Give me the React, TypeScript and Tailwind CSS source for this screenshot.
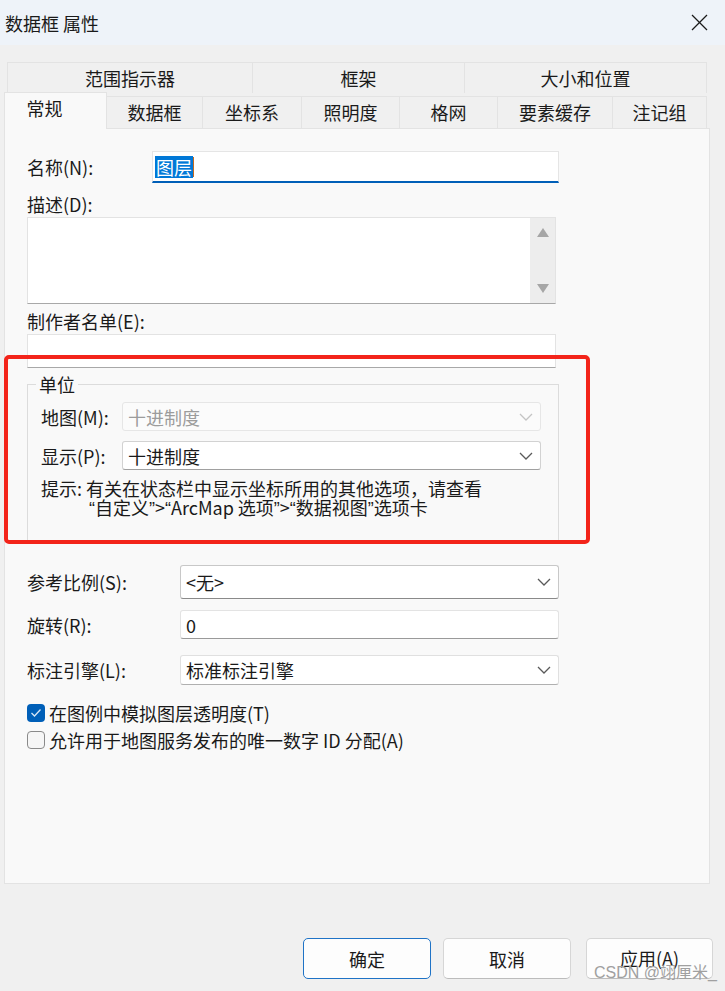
import React from "react";

function Chevron({ disabled }: { disabled?: boolean }) {
  return (
    <svg width="14" height="8" viewBox="0 0 14 8" className="shrink-0">
      <polyline
        points="1,1 7,7 13,1"
        fill="none"
        stroke={disabled ? "#c4c4c4" : "#5a5a5a"}
        strokeWidth="1.3"
      />
    </svg>
  );
}

function Combo({
  text,
  w,
  h,
  disabled,
  border,
}: {
  text: string;
  w: string;
  h: string;
  disabled?: boolean;
  border: string;
}) {
  return (
    <div
      className={`${w} ${h} ${border} flex items-center justify-between pl-[5px] pr-[7px] rounded-[3px] ${
        disabled ? "bg-[#fbfbfb] text-[#9c9c9c]" : "bg-white text-[#1a1a1a]"
      }`}
    >
      <span>{text}</span>
      <Chevron disabled={disabled} />
    </div>
  );
}

function Q({ c }: { c: string }) {
  return <span className="font-['Liberation_Sans',sans-serif] leading-[18px]">{c}</span>;
}

export default function App() {
  return (
    <div className="relative w-[725px] h-[991px] overflow-hidden bg-[#f0f0f0] text-[#1a1a1a] text-[18px] leading-[20px] font-['Noto_Sans_CJK_SC','Noto_Sans',sans-serif]">
      {/* Title bar */}
      <div className="h-[45px] bg-[#eef3f9] flex items-center justify-between pl-[5px] pr-[17px]">
        <span className="text-[18px]">数据框 属性</span>
        <svg width="17" height="17" viewBox="0 0 17 17">
          <line x1="1" y1="1" x2="16" y2="16" stroke="#1a1a1a" strokeWidth="1.2" />
          <line x1="16" y1="1" x2="1" y2="16" stroke="#1a1a1a" strokeWidth="1.2" />
        </svg>
      </div>

      {/* Tabs */}
      <div className="pt-[17px] pl-[4px]">
        <div className="ml-[3px] w-[700px] h-[31px] flex">
          <div className="w-[246px] h-full flex items-center justify-center border-t border-l border-r border-[#e3e3e3]">
            范围指示器
          </div>
          <div className="w-[212px] h-full flex items-center justify-center border-t border-r border-[#e3e3e3]">
            框架
          </div>
          <div className="w-[242px] h-full flex items-center justify-center border-t border-r border-[#e3e3e3]">
            大小和位置
          </div>
        </div>
        <div className="flex items-start h-[35px] w-[703px]">
          <div className="relative z-10 -mt-[1px] w-[103px] h-[37px] bg-[#f9f9f9] border-t border-l border-r border-[#e3e3e3] flex justify-center pt-[5px] pr-[22px]">
            常规
          </div>
          {[
            ["数据框", "w-[96px]"],
            ["坐标系", "w-[99px]"],
            ["照明度", "w-[98px]"],
            ["格网", "w-[98px]"],
            ["要素缓存", "w-[115px]"],
            ["注记组", "w-[94px]"],
          ].map(([t, w]) => (
            <div
              key={t}
              className={`${w} mt-[3px] h-[32px] border-t border-r border-[#e3e3e3] flex items-center justify-center pb-[2px]`}
            >
              {t}
            </div>
          ))}
        </div>

        {/* Panel */}
        <div className="w-[706px] h-[756px] border border-[#e3e3e3] bg-[#f9f9f9] pl-[22px]">
          {/* Name */}
          <div className="mt-[22px] flex items-center h-[32px]">
            <div className="w-[125px]">名称(N):</div>
            <div className="w-[407px] h-[32px] bg-white border border-[#e5e5e5] border-b-2 border-b-[#005fb8] flex items-center pl-[2px]">
              <span className="bg-[#0078d7] text-white leading-[22px] px-[1px]">图层</span>
              <span className="w-[1px] h-[20px] bg-[#c86a1e]"></span>
            </div>
          </div>

          {/* Description */}
          <div className="mt-[11px] h-[20px]">描述(D):</div>
          <div className="mt-[3px] w-[529px] h-[87px] bg-white border border-[#e3e3e3] border-b-[#a8a8a8] flex justify-end">
            <div className="w-[25px] h-full bg-[#ededed] flex flex-col items-center justify-between pt-[10px] pb-[10px]">
              <svg width="12" height="9" viewBox="0 0 12 9">
                <polygon points="6,0 12,9 0,9" fill="#a6a6a6" />
              </svg>
              <svg width="12" height="9" viewBox="0 0 12 9">
                <polygon points="0,0 12,0 6,9" fill="#a6a6a6" />
              </svg>
            </div>
          </div>

          {/* Author */}
          <div className="mt-[7px] h-[20px]">制作者名单(E):</div>
          <div className="mt-[3px] w-[529px] h-[34px] bg-white border border-[#e3e3e3] border-b-[#a8a8a8]"></div>

          {/* Units group */}
          <div className="mt-[16px] relative w-[532px] h-[158px] border border-[#dcdcdc]">
            <span className="absolute -top-[11px] left-[8px] px-[3px] bg-[#f9f9f9]">单位</span>
            <div className="pl-[13px] pt-[17px]">
              <div className="flex items-center h-[29px]">
                <div className="w-[81px]">地图(M):</div>
                <Combo text="十进制度" w="w-[419px]" h="h-[29px]" disabled border="border border-[#e6e6e6]" />
              </div>
              <div className="mt-[10px] flex items-center h-[29px]">
                <div className="w-[81px]">显示(P):</div>
                <Combo text="十进制度" w="w-[419px]" h="h-[29px]" border="border border-[#d2d2d2] border-b-[#a0a0a0]" />
              </div>
              <div className="mt-[9px] flex flex-col gap-[1px]">
                <div className="h-[18px] leading-[18px]">提示: 有关在状态栏中显示坐标所用的其他选项，请查看</div>
                <div className="h-[18px] leading-[18px] pl-[48px]">
                  <Q c="“" />自定义<Q c="”" />&gt;<Q c="“" />ArcMap 选项<Q c="”" />&gt;<Q c="“" />数据视图<Q c="”" />选项卡
                </div>
              </div>
            </div>
          </div>

          {/* Reference scale */}
          <div className="mt-[23px] flex items-center h-[34px]">
            <div className="w-[153px]">参考比例(S):</div>
            <Combo text="<无>" w="w-[379px]" h="h-[34px]" border="border border-[#c8c8c8] border-b-[#8a8a8a]" />
          </div>
          <div className="mt-[11px] flex items-center h-[29px]">
            <div className="w-[153px]">旋转(R):</div>
            <div className="w-[379px] h-[29px] bg-white border border-[#e3e3e3] border-b-[#9a9a9a] rounded-[3px] flex items-center pl-[5px]">
              0
            </div>
          </div>
          <div className="mt-[16px] flex items-center h-[30px]">
            <div className="w-[153px]">标注引擎(L):</div>
            <Combo text="标准标注引擎" w="w-[379px]" h="h-[30px]" border="border border-[#e0e0e0] border-b-[#b0b0b0]" />
          </div>

          {/* Checkboxes */}
          <div className="mt-[19px] flex items-center h-[18px] gap-[4px]">
            <div className="w-[18px] h-[18px] rounded-[4px] bg-[#005fb8] flex items-center justify-center">
              <svg width="12" height="10" viewBox="0 0 12 10">
                <polyline points="1.5,5 4.5,8 10.5,1.5" fill="none" stroke="#d8e6f5" strokeWidth="1.3" />
              </svg>
            </div>
            <span>在图例中模拟图层透明度(T)</span>
          </div>
          <div className="mt-[9px] flex items-center h-[18px] gap-[4px]">
            <div className="w-[18px] h-[18px] rounded-[4px] border border-[#8a8a8a] bg-[#f6f6f6]"></div>
            <span>允许用于地图服务发布的唯一数字 ID 分配(A)</span>
          </div>
        </div>
      </div>

      {/* Buttons */}
      <div className="mt-[54px] flex justify-end pr-[12px]">
        <div className="w-[128px] h-[41px] rounded-[5px] border border-[#1f73c6] bg-[#fdfdfd] flex items-center justify-center">
          确定
        </div>
        <div className="ml-[12px] w-[128px] h-[41px] rounded-[5px] border border-[#d6d6d6] border-b-[#bcbcbc] bg-[#fdfdfd] flex items-center justify-center">
          取消
        </div>
        <div className="ml-[15px] w-[127px] h-[41px] rounded-[5px] border border-[#d6d6d6] border-b-[#bcbcbc] bg-[#fdfdfd] flex items-center justify-center pb-[2px]">
          应用(A)
        </div>
      </div>

      {/* Red highlight box */}
      <div className="absolute left-[4px] top-[355px] w-[586px] h-[189px] border-[4px] border-[#f3241a] rounded-[5px]"></div>

      {/* Watermark */}
      <div className="absolute left-[594px] top-[964px] text-[16px] leading-[18px] text-[#a0a0a0] font-['Liberation_Sans','Noto_Sans_CJK_SC',sans-serif]">
        CSDN @翊厘米_
      </div>
    </div>
  );
}
